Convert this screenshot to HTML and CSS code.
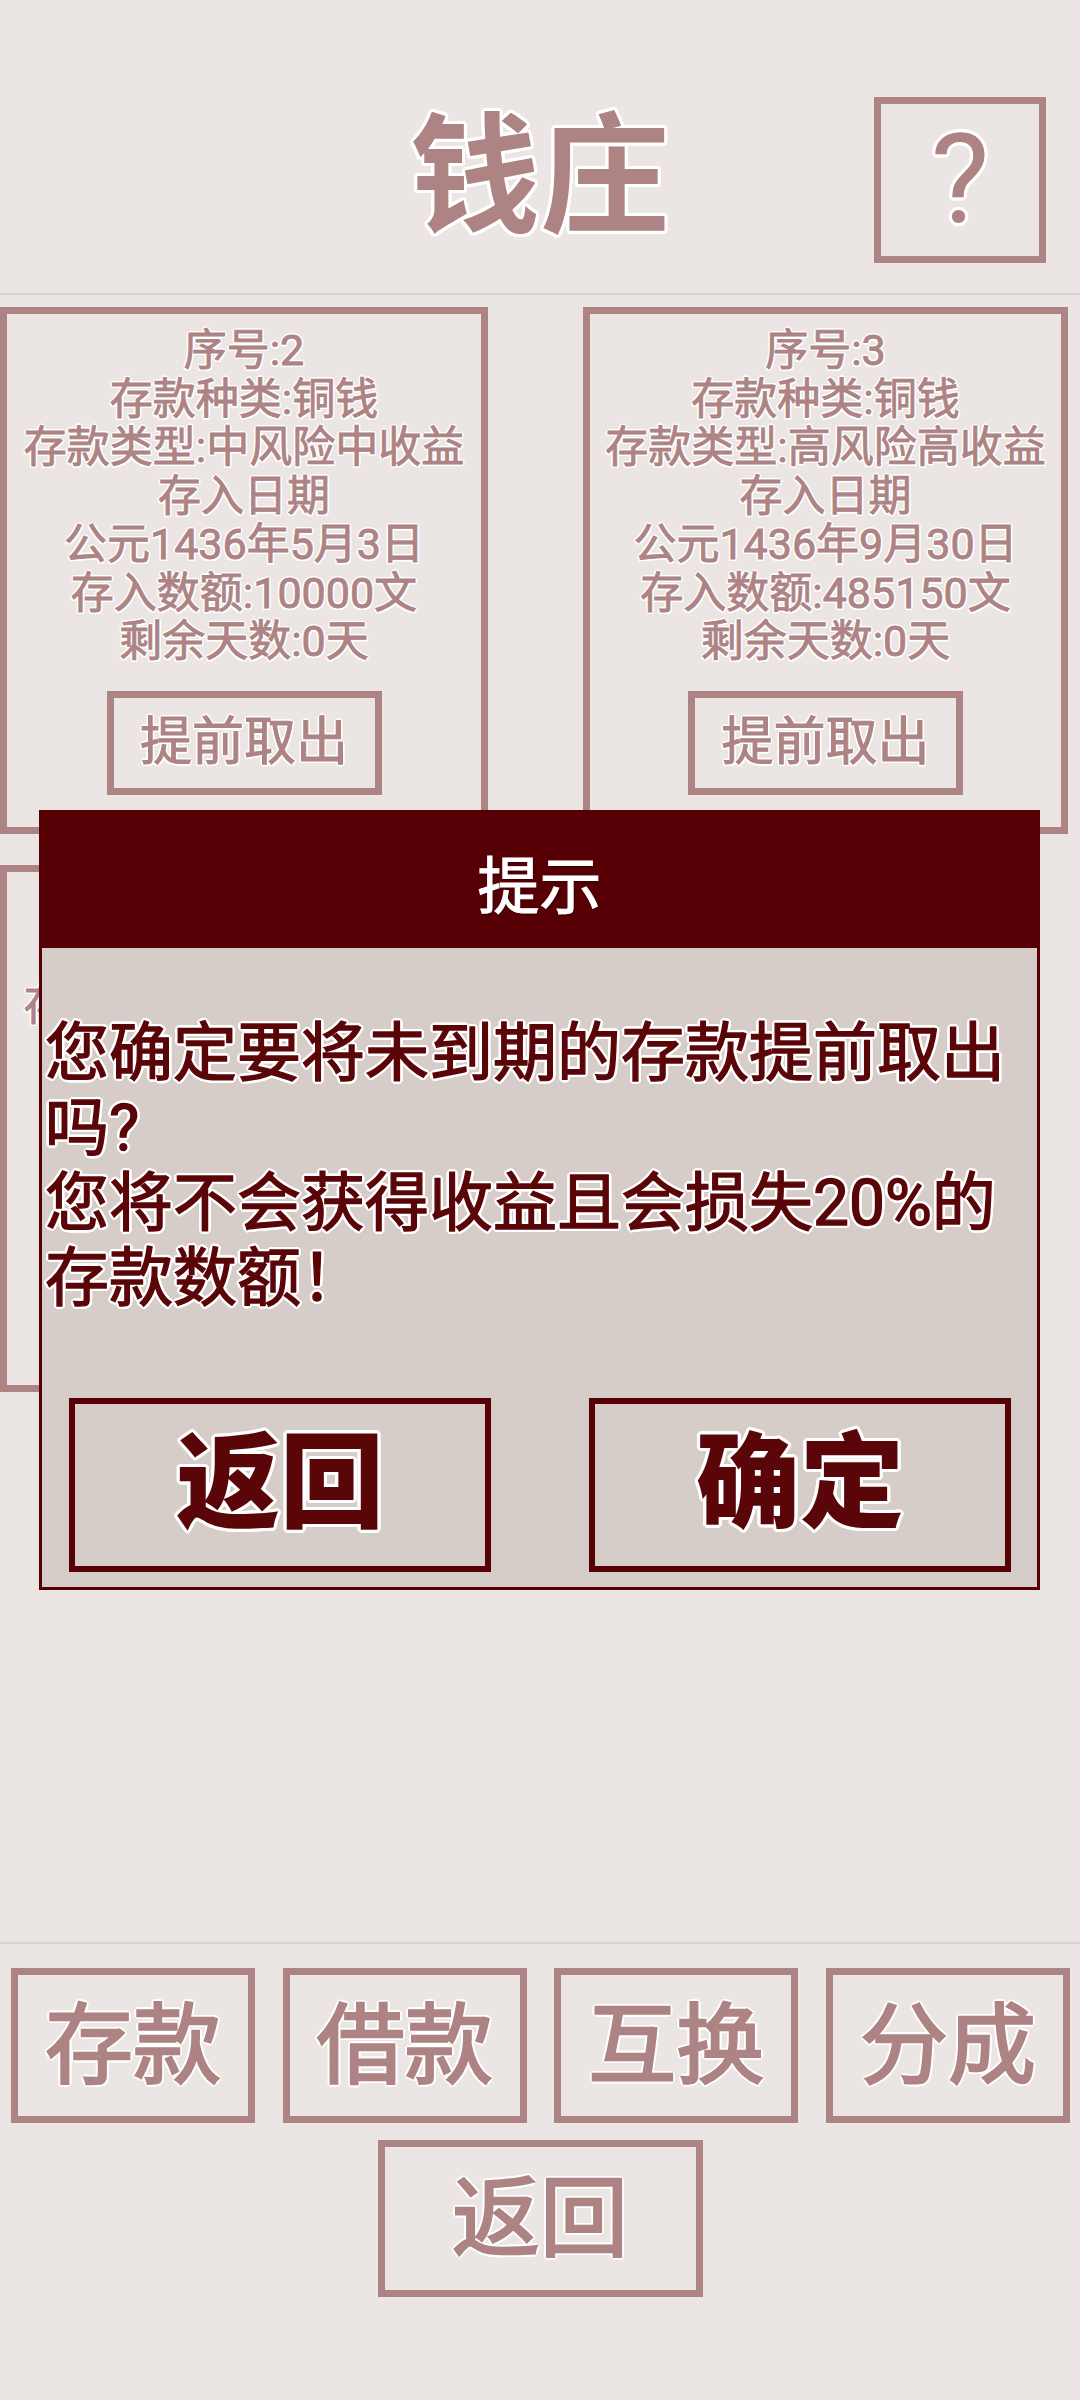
FILE: index.html
```html
<!DOCTYPE html>
<html lang="zh-CN">
<head>
<meta charset="utf-8">
<title>钱庄</title>
<link rel="stylesheet" href="styles.css">
</head>
<body>
<div class="screen">
  <header class="top">
    <span class="top-side"></span>
    <h1 class="title outline-lg">钱庄</h1>
    <div class="top-side top-right">
      <button class="help outline-md">?</button>
    </div>
  </header>

  <main class="list">
    <div class="grid">
      <section class="card">
        <div class="card-text outline-sm">
          <p>序号:2</p>
          <p>存款种类:铜钱</p>
          <p>存款类型:中风险中收益</p>
          <p>存入日期</p>
          <p>公元1436年5月3日</p>
          <p>存入数额:10000文</p>
          <p>剩余天数:0天</p>
        </div>
        <button class="card-btn outline-sm">提前取出</button>
      </section>
      <section class="card">
        <div class="card-text outline-sm">
          <p>序号:3</p>
          <p>存款种类:铜钱</p>
          <p>存款类型:高风险高收益</p>
          <p>存入日期</p>
          <p>公元1436年9月30日</p>
          <p>存入数额:485150文</p>
          <p>剩余天数:0天</p>
        </div>
        <button class="card-btn outline-sm">提前取出</button>
      </section>
      <section class="card">
        <div class="card-text outline-sm">
          <p>序号:4</p>
          <p>存款种类:铜钱</p>
          <p>存款类型:中风险中收益</p>
          <p>存入日期</p>
          <p>公元1436年12月13日</p>
          <p>存入数额:20000文</p>
          <p>剩余天数:5天</p>
        </div>
        <button class="card-btn outline-sm">提前取出</button>
      </section>
    </div>
  </main>

  <footer class="nav">
    <div class="nav-row">
      <button class="nav-btn outline-md">存款</button>
      <button class="nav-btn outline-md">借款</button>
      <button class="nav-btn outline-md">互换</button>
      <button class="nav-btn outline-md">分成</button>
    </div>
    <button class="nav-back outline-md">返回</button>
  </footer>

  <div class="dialog" role="dialog">
    <div class="dialog-head">提示</div>
    <div class="dialog-body">
      <p class="dialog-msg outline-md">您确定要将未到期的存款提前取出吗?<br>您将不会获得收益且会损失20%的存款数额！</p>
      <div class="dialog-actions">
        <button class="dialog-btn outline-md">返回</button>
        <button class="dialog-btn outline-md">确定</button>
      </div>
    </div>
  </div>
</div>
</body>
</html>
```

FILE: styles.css
```css
* {
  box-sizing: border-box;
}

html, body {
  margin: 0;
  padding: 0;
}

body {
  background: #ebe6e3;
  font-family: "Roboto", "Noto Sans CJK SC", sans-serif;
  color: #ad8383;
}

button {
  font-family: inherit;
  background: transparent;
  padding: 0;
  margin: 0;
  cursor: pointer;
}

p {
  margin: 0;
}

.screen {
  position: relative;
  width: 1080px;
  height: 2400px;
  display: flex;
  flex-direction: column;
  overflow: hidden;
}

/* white halo around glyphs */
.outline-sm {
  text-shadow:
    2px 0 #fff, -2px 0 #fff, 0 2px #fff, 0 -2px #fff,
    1.5px 1.5px #fff, -1.5px 1.5px #fff, 1.5px -1.5px #fff, -1.5px -1.5px #fff;
}

.outline-md {
  text-shadow:
    3px 0 #fff, -3px 0 #fff, 0 3px #fff, 0 -3px #fff,
    2px 2px #fff, -2px 2px #fff, 2px -2px #fff, -2px -2px #fff,
    3px 1px #fff, -3px 1px #fff, 3px -1px #fff, -3px -1px #fff,
    1px 3px #fff, -1px 3px #fff, 1px -3px #fff, -1px -3px #fff;
}

.outline-lg {
  text-shadow:
    3px 0 #fff, -3px 0 #fff, 0 3px #fff, 0 -3px #fff,
    2px 2px #fff, -2px 2px #fff, 2px -2px #fff, -2px -2px #fff,
    3px 1.5px #fff, -3px 1.5px #fff, 3px -1.5px #fff, -3px -1.5px #fff,
    1.5px 3px #fff, -1.5px 3px #fff, 1.5px -3px #fff, -1.5px -3px #fff;
}

/* header */
.top {
  flex: 0 0 295px;
  display: grid;
  grid-template-columns: 1fr auto 1fr;
  align-items: center;
  padding-top: 66px;
  border-bottom: 2px solid #d7d2cf;
}

.title {
  margin: 0 0 4px;
  font-size: 130px;
  line-height: 1;
  font-weight: 700;
  color: #ad8383;
}

.top-right {
  display: flex;
  justify-content: flex-end;
  padding-right: 34px;
}

.help {
  width: 172px;
  height: 166px;
  border: 7px solid #ad8383;
  color: #ad8383;
  font-size: 124px;
  line-height: 1;
  font-weight: 400;
  display: flex;
  align-items: center;
  justify-content: center;
}

/* deposit list */
.list {
  flex: 1 1 auto;
  overflow: hidden;
  padding-top: 12px;
}

.grid {
  display: grid;
  grid-template-columns: 488px 485px;
  column-gap: 95px;
  row-gap: 31px;
}

.card {
  height: 527px;
  border: 7px solid #ad8383;
  padding-top: 12px;
  display: flex;
  flex-direction: column;
  align-items: center;
}

.card-text {
  font-size: 43px;
  line-height: 48.5px;
  font-weight: 400;
  -webkit-text-stroke: 0.9px #ad8383;
  text-align: center;
  white-space: nowrap;
}

.card-btn {
  margin-top: 25px;
  width: 275px;
  height: 104px;
  border: 7px solid #ad8383;
  color: #ad8383;
  font-size: 52px;
  font-weight: 400;
  -webkit-text-stroke: 1px #ad8383;
  line-height: 1;
}

/* bottom navigation */
.nav {
  flex: 0 0 458px;
  border-top: 2px solid #d7d2cf;
  padding-top: 24px;
  display: flex;
  flex-direction: column;
  align-items: center;
}

.nav-row {
  align-self: stretch;
  display: flex;
  justify-content: space-between;
  padding: 0 10px 0 11px;
}

.nav-btn,
.nav-back {
  border: 7px solid #ad8383;
  color: #ad8383;
  font-size: 88px;
  font-weight: 400;
  -webkit-text-stroke: 2.4px #ad8383;
  line-height: 1;
}

.nav-btn {
  width: 244px;
  height: 155px;
}

.nav-back {
  margin-top: 17px;
  width: 325px;
  height: 157px;
}

/* confirm dialog */
.dialog {
  position: absolute;
  left: 39px;
  top: 810px;
  width: 1001px;
  height: 780px;
  border: 3px solid #560006;
  background: #d6cdc9;
  display: flex;
  flex-direction: column;
}

.dialog-head {
  flex: 0 0 135px;
  background: #560006;
  color: #fff;
  font-size: 62px;
  font-weight: 400;
  -webkit-text-stroke: 1px #fff;
  display: flex;
  align-items: center;
  justify-content: center;
  padding-top: 2px;
  text-shadow: 1px 1px 2px #220000;
}

.dialog-body {
  flex: 1 1 auto;
  display: flex;
  flex-direction: column;
}

.dialog-msg {
  height: 300px;
  margin-top: 68px;
  padding: 0 2px 0 3px;
  font-size: 64px;
  line-height: 75px;
  font-weight: 400;
  -webkit-text-stroke: 1.4px #5a0508;
  color: #5a0508;
}

.dialog-actions {
  margin-top: 82px;
  display: flex;
  justify-content: space-between;
  padding: 0 26px 0 27px;
}

.dialog-btn {
  width: 422px;
  height: 174px;
  border: 6px solid #560006;
  background: #d6cdc9;
  color: #5a0508;
  font-size: 104px;
  font-weight: 900;
  line-height: 1;
}
```
